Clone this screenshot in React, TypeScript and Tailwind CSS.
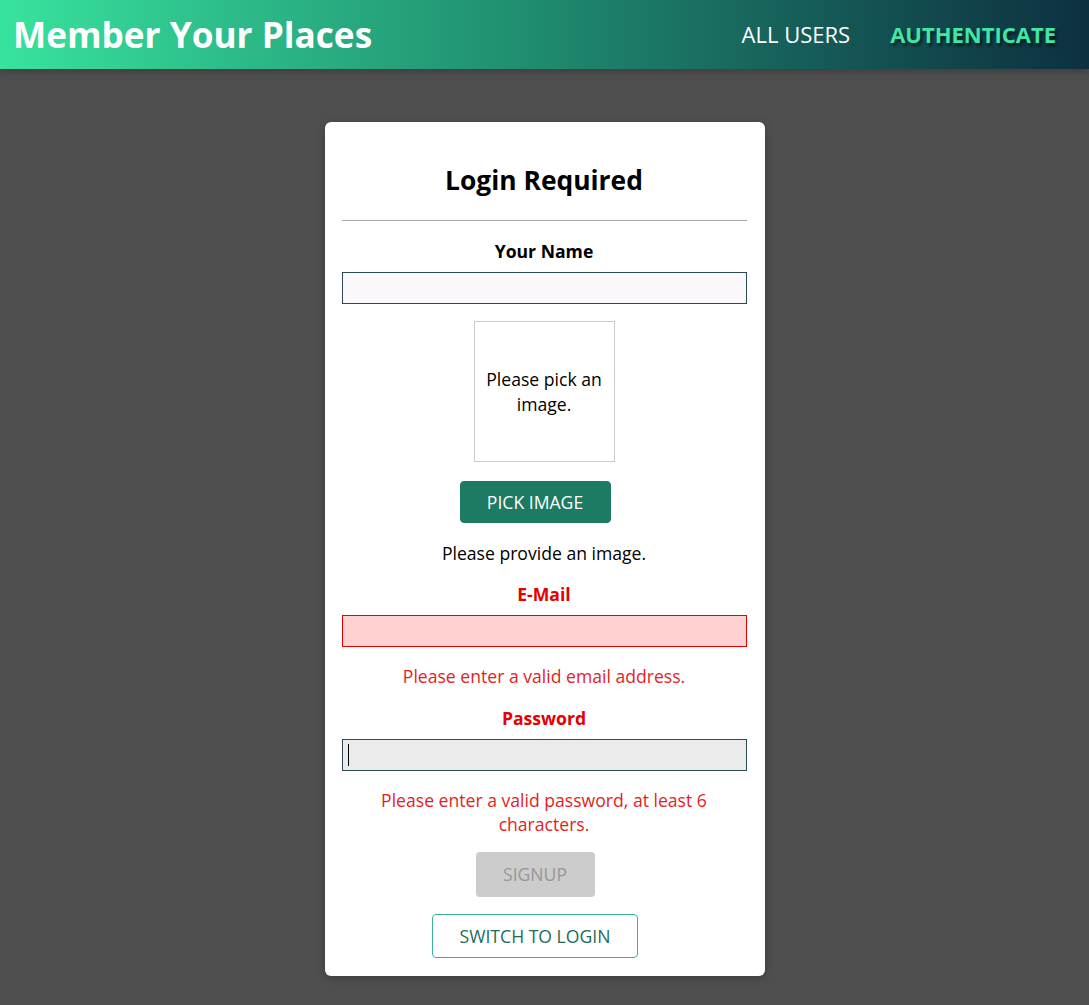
import React from 'react';

const font = { fontFamily: '"Open Sans", "Noto Sans", sans-serif' };

function Field({
  label,
  invalid,
  bg,
  error,
  caret,
}: {
  label: string;
  invalid?: boolean;
  bg: string;
  error?: string;
  caret?: boolean;
}) {
  return (
    <div className="flex flex-col items-center w-full">
      <label
        className={`font-bold leading-[24px] mb-[9px] ${invalid ? 'text-[#e60000]' : 'text-black'}`}
      >
        {label}
      </label>
      <div
        className={`relative w-full h-8 border ${bg} ${invalid && !caret ? 'border-[#e60000]' : 'border-[#2b4b53]'}`}
      >
        {caret && <span className="absolute left-[5px] top-[4px] w-px h-[22px] bg-black" />}
      </div>
      {error && (
        <p className="text-[#e31e1e] leading-[24px] text-center mt-[17px]">{error}</p>
      )}
    </div>
  );
}

export default function App() {
  return (
    <div className="min-h-screen bg-[#4f4f4f] text-[17.6px]" style={font}>
      <header className="h-[69px] flex items-center justify-between pl-[13px] pr-[14px] bg-gradient-to-r from-[#38e39e] via-[#1f8a6e] to-[#0d3040] shadow-[0_2px_8px_rgba(0,0,0,0.26)]">
        <h1 className="text-white font-bold text-[35.2px] leading-none">Member Your Places</h1>
        <nav className="flex items-center gap-[40px] pr-[19px] text-[22px]">
          <span className="text-white">ALL USERS</span>
          <span className="text-[#40e6a6] font-bold [text-shadow:2px_3px_3px_rgba(0,0,0,0.55)]">
            AUTHENTICATE
          </span>
        </nav>
      </header>

      <main className="flex justify-center pt-[53px] pb-[29px]">
        <div className="w-[440px] bg-white rounded-md pl-[17px] pr-[18px] pt-[40px] pb-[18px] flex flex-col items-center shadow-[0_2px_8px_rgba(0,0,0,0.26)]">
          <h2 className="text-[26.4px] font-bold leading-[36px] text-black">Login Required</h2>
          <hr className="w-full border-t border-[#aaaaaa] mt-[22px] mb-[18px]" />

          <Field label="Your Name" bg="bg-[#faf8fa]" />

          <div className="mt-[17px] w-[141px] h-[141px] border border-[#cccccc] flex items-center justify-center text-center leading-[25px] text-black px-2">
            Please pick an image.
          </div>
          <button className="mt-[19px] mr-[18px] w-[151px] h-[42px] rounded bg-[#1d7a63] text-white border border-[#1d7a63]">
            PICK IMAGE
          </button>
          <p className="mt-[18px] leading-[24px] text-black">Please provide an image.</p>

          <div className="mt-[17px] w-full">
            <Field
              label="E-Mail"
              invalid
              bg="bg-[#ffd1d1]"
              error="Please enter a valid email address."
            />
          </div>
          <div className="mt-[18px] w-full">
            <Field
              label="Password"
              invalid
              caret
              bg="bg-[#ebebeb]"
              error="Please enter a valid password, at least 6 characters."
            />
          </div>

          <button className="mt-[16px] mr-[18px] w-[119px] h-[45px] rounded bg-[#cccccc] text-[#979797]">
            SIGNUP
          </button>
          <button className="mt-[17px] mr-[18px] w-[206px] h-[44px] rounded border border-[#3ab59b] bg-white text-[#1d6b5b]">
            SWITCH TO LOGIN
          </button>
        </div>
      </main>
    </div>
  );
}
